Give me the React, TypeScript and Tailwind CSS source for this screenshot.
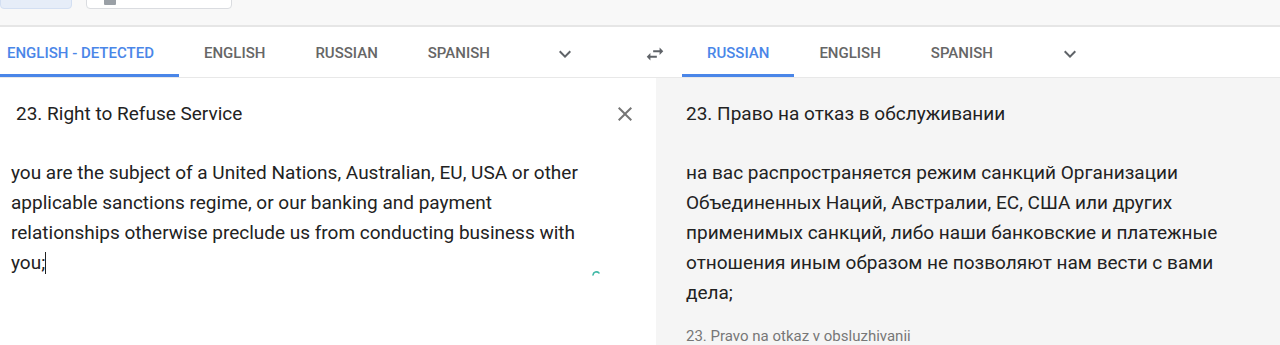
import React from 'react';

const font = { fontFamily: 'Roboto, "Noto Sans", Arial, sans-serif' };

const ChevronDown = () => (
  <svg width="24" height="24" viewBox="0 0 24 24" fill="#5f6368">
    <path d="M16.59 8.59L12 13.17 7.41 8.59 6 10l6 6 6-6z" />
  </svg>
);

const SwapIcon = () => (
  <svg width="22" height="22" viewBox="0 0 24 24" fill="#5f6368">
    <path d="M6.99 11L3 15l3.99 4v-3H14v-2H6.99v-3zM21 9l-3.99-4v3H10v2h7.01v3L21 9z" />
  </svg>
);

const CloseIcon = () => (
  <svg width="24" height="24" viewBox="0 0 24 24" fill="#757575">
    <path d="M19 6.41L17.59 5 12 10.59 6.41 5 5 6.41 10.59 12 5 17.59 6.41 19 12 13.41 17.59 19 19 17.59 13.41 12z" />
  </svg>
);

interface TabProps {
  label: string;
  active?: boolean;
  first?: boolean;
}

const Tab = ({ label, active = false, first = false }: TabProps) => (
  <div
    className={
      'h-full flex items-center pt-[5px] text-[15px] font-medium border-b-[3px] ' +
      (first ? 'pl-[7px] pr-[25px] ' : 'px-[25px] ') +
      (active ? 'text-[#4a86e8] border-[#4a86e8]' : 'text-[#666666] border-transparent')
    }
  >
    {label}
  </div>
);

export default function App() {
  return (
    <div className="w-[1280px] h-[345px] overflow-hidden bg-white" style={font}>
      {/* Top toolbar, mostly scrolled away */}
      <div className="h-[27px] bg-[#f8f8f8] border-b-2 border-[#e6e6e6] flex items-start gap-[14px]">
        <div className="w-[72px] h-[36px] mt-[-27px] bg-[#e6edf8] border border-[#d3dff2] rounded-[4px]" />
        <div className="w-[146px] h-[36px] mt-[-27px] bg-white border border-[#dadce0] rounded-[4px] flex items-end pl-[17px] pb-[3px]">
          <div className="w-[12px] h-[12px] bg-[#9aa0a6] rounded-[1px]" />
        </div>
      </div>

      {/* Language tabs */}
      <div className="h-[51px] flex border-b border-[#e8e8e8] bg-white">
        <div className="w-[628px] h-full flex items-stretch">
          <Tab label="ENGLISH - DETECTED" active first />
          <Tab label="ENGLISH" />
          <Tab label="RUSSIAN" />
          <Tab label="SPANISH" />
          <div className="w-[48px] ml-auto mr-[39px] pt-[4px] flex items-center justify-center">
            <ChevronDown />
          </div>
        </div>
        <div className="w-[54px] h-full pt-[4px] flex items-center justify-center">
          <SwapIcon />
        </div>
        <div className="flex-1 h-full flex items-stretch">
          <Tab label="RUSSIAN" active />
          <Tab label="ENGLISH" />
          <Tab label="SPANISH" />
          <div className="w-[48px] ml-[28px] pt-[4px] flex items-center justify-center">
            <ChevronDown />
          </div>
        </div>
      </div>

      {/* Panels */}
      <div className="flex h-[267px]">
        <div className="relative w-[656px] h-full bg-white pt-[21px] pl-[11px] text-[19px] leading-[30px] text-[#222222]">
          <div className="flex items-center">
            <div className="pl-[5px]">23. Right to Refuse Service</div>
            <div className="ml-auto mr-[19px] flex items-center">
              <CloseIcon />
            </div>
          </div>
          <div className="mt-[29px] w-[586px]">
            you are the subject of a United Nations, Australian, EU, USA or other applicable sanctions regime, or our banking and payment relationships otherwise preclude us from conducting business with you;
            <span className="inline-block w-px h-[22px] bg-[#222222] align-[-5px]" />
          </div>
          <svg className="absolute left-[591px] top-[190px]" width="10" height="10" viewBox="0 0 10 10">
            <path d="M2 7 A3.5 3.5 0 0 1 8 5" fill="none" stroke="#3fb8a6" strokeWidth="1.6" strokeLinecap="round" />
          </svg>
        </div>
        <div className="flex-1 h-full bg-[#f5f5f5] pt-[21px] pl-[30px] pr-[44px] text-[19px] leading-[30px] text-[#222222]">
          <div>23. Право на отказ в обслуживании</div>
          <div className="mt-[29px]">
            на вас распространяется режим санкций Организации Объединенных Наций, Австралии, ЕС, США или других применимых санкций, либо наши банковские и платежные отношения иным образом не позволяют нам вести с вами дела;
          </div>
          <div className="mt-[18px] text-[15px] leading-[20px] text-[#777777]">
            23. Pravo na otkaz v obsluzhivanii
          </div>
        </div>
      </div>
    </div>
  );
}
